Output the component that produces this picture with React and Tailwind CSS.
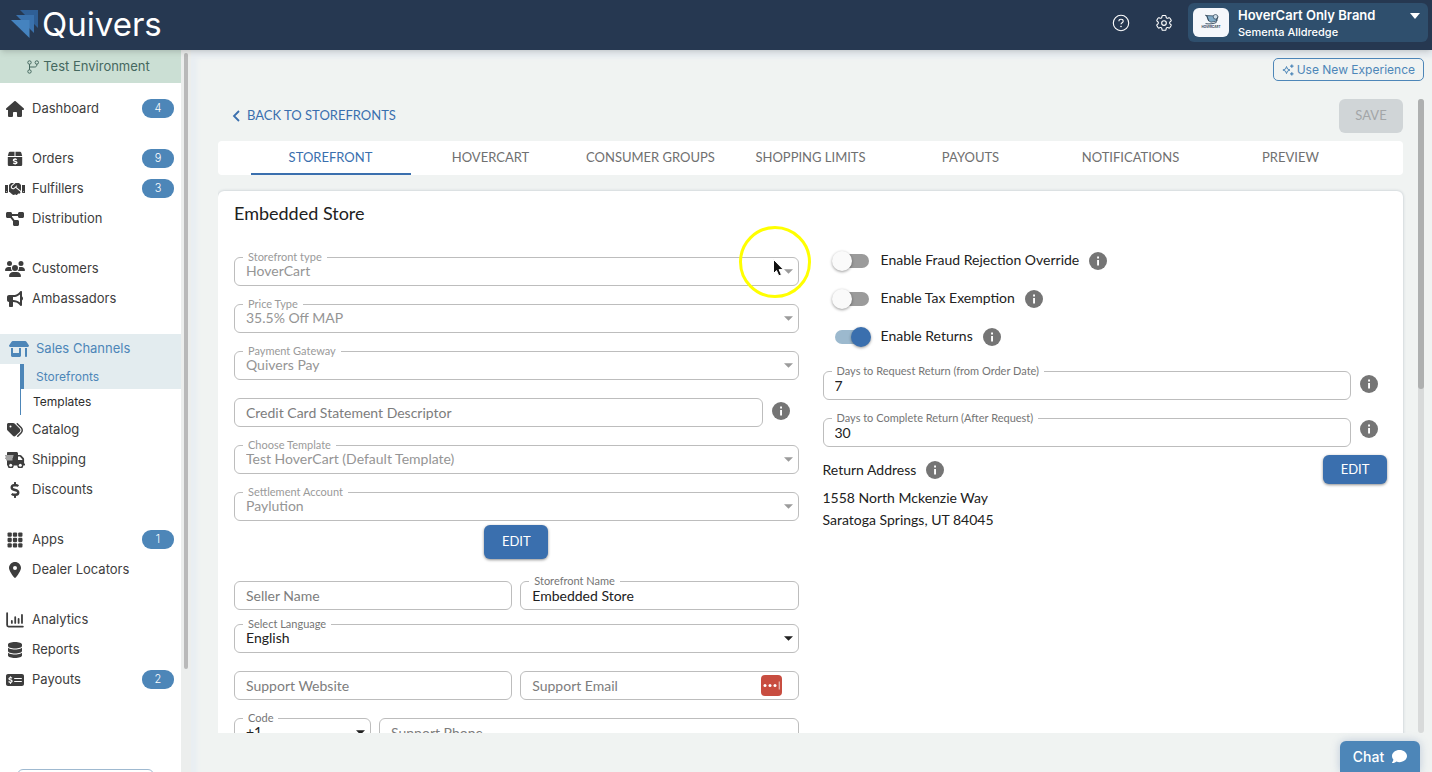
import { useState } from "react";
import clsx from "clsx";
import { FaHandshake, FaDollarSign } from "react-icons/fa";
import {
  FaHouse,
  FaBullhorn,
  FaDiagramProject,
  FaUsers,
  FaShop,
  FaTags,
  FaLocationDot,
  FaDatabase,
  FaMoneyCheckDollar,
  FaComment,
} from "react-icons/fa6";

function BoxDollarIcon({ className }) {
  return (
    <svg viewBox="0 0 16 16" className={className} fill="currentColor">
      <path d="M3 .8h4.500V5H.8l.9-3.300C1.900 1.100 2.400.8 3 .8zM8.500.8H13c.6 0 1.100.3 1.300.9l.9 3.300H8.500z" />
      <path d="M.8 6h14.400v7.500c0 .9-.7 1.600-1.600 1.600H2.400c-.9 0-1.600-.7-1.600-1.600z" />
      <path
        d="M9.800 8.600c-.9-.6-3.400-.7-3.400.6 0 1.500 3.500.8 3.500 2.300 0 1.300-2.600 1.200-3.700.5M8.100 7.200v1M8.100 12.400v1.200"
        fill="none"
        stroke="#fff"
        strokeWidth="1.400"
      />
    </svg>
  );
}

function TruckIcon({ className }) {
  return (
    <svg viewBox="0 0 20 16" className={className} fill="currentColor">
      <path d="M3 0h8.500c.8 0 1.500.7 1.500 1.500V3h2.200c.5 0 .9.200 1.200.5l2.300 2.400c.2.3.4.700.4 1.100v4.500h.4c.3 0 .5.3.5.5v1c0 .3-.2.5-.5.5h-1.200a3 3 0 0 1-6 0H8.700a3 3 0 0 1-6 0H2V1c0-.6.4-1 1-1z" />
      <path d="M13 4.500V8h4.300v-.8L14.900 4.500z" fill="#fff" />
      <path d="M0 3h8.500v1.500H8V6h-.5v2.500H1V7H0V5.500h1V4.500H0z" fill="#a3a3a3" />
      <circle cx="5.700" cy="13.200" r="1.500" fill="#fff" />
      <circle cx="15.300" cy="13.200" r="1.500" fill="#fff" />
    </svg>
  );
}

function AppsIcon({ className }) {
  return (
    <svg viewBox="0 0 15 15" className={className} fill="currentColor">
      {[0.5, 5.5, 10.5].map((y) =>
        [0.5, 5.5, 10.5].map((x) => (
          <rect key={`${x}-${y}`} x={x} y={y} width="4" height="4" rx="1" />
        )),
      )}
    </svg>
  );
}

function ChartIcon({ className }) {
  return (
    <svg
      viewBox="0 0 16 14"
      className={className}
      fill="none"
      stroke="currentColor"
      strokeWidth="1.600"
      strokeLinecap="round"
    >
      <path d="M1 1v10.500c0 .8.500 1.300 1.300 1.300H15" />
      <path d="M5.200 7.800v1.800M8.200 4.500v5.100M11.200 6v3.600M14.200 2.500v7.100" />
    </svg>
  );
}

function BranchIcon({ className }) {
  return (
    <svg
      viewBox="0 0 12 14"
      className={className}
      fill="none"
      stroke="currentColor"
      strokeWidth="1"
    >
      <circle cx="2.500" cy="2.500" r="1.700" />
      <circle cx="9.800" cy="2.500" r="1.700" />
      <circle cx="2.500" cy="11.500" r="1.700" />
      <path d="M2.500 4.200v5.600M9.800 4.200v.8c0 1.200-.8 2-2 2H2.500" />
    </svg>
  );
}

function SparklesIcon({ className }) {
  return (
    <svg
      viewBox="0 0 12 12"
      className={className}
      fill="none"
      stroke="currentColor"
    >
      <path d="M4.500 2.500 5.500 5 8 6 5.500 7.100 4.500 9.600 3.500 7.100.9 6 3.500 5z" />
      <path d="M9.800.4v3.400M8.100 2.100h3.400M9.800 8.200v3.400M8.100 9.900h3.400" strokeWidth="1.300" />
    </svg>
  );
}

function InfoIcon({ className }) {
  return (
    <svg
      viewBox="0 0 18 18"
      className={clsx("size-[18px] shrink-0", className)}
      role="img"
      aria-label="Info"
    >
      <circle cx="9" cy="9" r="9" fill="#757575" />
      <path d="M8.100 4.500h1.900v1.900H8.100zM8.100 8.100h1.900v5.400H8.100z" fill="#fff" />
    </svg>
  );
}

function HelpIcon() {
  return (
    <svg viewBox="0 0 18 18" className="size-[18px]" fill="none" stroke="#fff">
      <circle cx="9" cy="9" r="7.700" strokeWidth="1.100" />
      <path
        d="M6.900 7.200c0-1.200.9-1.900 2.100-1.900s2.200.7 2.200 1.900c0 1.600-2.200 1.600-2.200 3.100"
        strokeWidth="1.100"
      />
      <circle cx="9" cy="12.500" r=".8" fill="#fff" stroke="none" />
    </svg>
  );
}

function GearIcon() {
  return (
    <svg
      viewBox="0 0 24 24"
      className="size-5"
      fill="none"
      stroke="#fff"
      strokeWidth="1.300"
      strokeLinecap="round"
      strokeLinejoin="round"
    >
      <path d="M9.600 3.900c.1-.5.6-.9 1.100-.9h2.600c.5 0 1 .4 1.100.9l.2 1.300c.1.400.3.700.6.900l.3.100c.3.200.7.200 1.100.1l1.200-.5c.5-.2 1.100 0 1.400.5l1.300 2.200c.3.500.2 1.100-.3 1.400l-1 .8c-.3.300-.4.600-.4 1v.3c0 .4.100.8.400 1l1 .8c.4.400.5 1 .3 1.500l-1.300 2.200c-.3.500-.9.700-1.400.5l-1.200-.5c-.4-.1-.8-.1-1.100.1l-.3.100c-.3.200-.5.500-.6.900l-.2 1.300c-.1.500-.6.900-1.100.9h-2.600c-.5 0-1-.4-1.100-.9l-.2-1.300c-.1-.4-.3-.7-.6-.9l-.3-.1c-.3-.2-.7-.2-1.100-.1l-1.200.5c-.5.200-1.100 0-1.400-.5l-1.300-2.200c-.3-.5-.2-1.100.3-1.500l1-.8c.3-.2.4-.6.4-1v-.3c0-.4-.1-.7-.4-1l-1-.8c-.5-.3-.6-.9-.3-1.400l1.300-2.200c.3-.5.9-.7 1.400-.5l1.200.5c.4.100.8.100 1.100-.1l.3-.1c.3-.2.5-.5.6-.9z" />
      <circle cx="12" cy="12" r="2.800" />
    </svg>
  );
}

function HoverCartLogo() {
  return (
    <span className="flex h-[29px] w-9 shrink-0 items-center justify-center rounded-md bg-[#f5f7fb]">
      <svg viewBox="0 0 36 29" className="h-[29px] w-9">
        <path d="M13.500 7.500l9 .5 1.500 5-6 1.200-2.500-1.500z" fill="#7fa9c6" stroke="#2d4256" strokeWidth=".7" />
        <circle cx="22.500" cy="8.800" r="2.300" fill="#cfdde8" stroke="#2d4256" strokeWidth=".7" />
        <path d="M12 7.200l1.800.4 2 5.500M25 8.500l-1.500 5" fill="none" stroke="#2d4256" strokeWidth=".8" />
        <path d="M12.500 15.600c3 .6 8 .4 11-1.200" fill="none" stroke="#2d4256" strokeWidth=".9" />
        <text
          x="18"
          y="20"
          textAnchor="middle"
          fontSize="3"
          fontWeight="700"
          fontFamily="Inter, sans-serif"
          fill="#2d4256"
        >
          HOVERCART
        </text>
      </svg>
    </span>
  );
}

const navGroups = [
  [{ label: "Dashboard", icon: FaHouse, badge: 4 }],
  [
    { label: "Orders", icon: BoxDollarIcon, badge: 9 },
    { label: "Fulfillers", icon: FaHandshake, badge: 3, wide: true },
    { label: "Distribution", icon: FaDiagramProject },
  ],
  [
    { label: "Customers", icon: FaUsers, wide: true },
    { label: "Ambassadors", icon: FaBullhorn },
  ],
  [
    {
      label: "Sales Channels",
      icon: FaShop,
      wide: true,
      active: true,
      children: ["Storefronts", "Templates"],
    },
    { label: "Catalog", icon: FaTags },
    { label: "Shipping", icon: TruckIcon, wide: true },
    { label: "Discounts", icon: FaDollarSign },
  ],
  [
    { label: "Apps", icon: AppsIcon, badge: 1 },
    { label: "Dealer Locators", icon: FaLocationDot },
  ],
  [
    { label: "Analytics", icon: ChartIcon },
    { label: "Reports", icon: FaDatabase },
    { label: "Payouts", icon: FaMoneyCheckDollar, badge: 2, wide: true },
  ],
];

function NavItem({ item }) {
  const Icon = item.icon;
  return (
    <li>
      <a
        href="#"
        className={clsx(
          "flex h-[30px] items-center pr-[7px]",
          item.active ? "bg-[#e3ecef] pl-2 text-[#4d86b8]" : "pl-1 text-[#3d3d3d]",
        )}
      >
        <span className="flex w-[22px] shrink-0 justify-center">
          <Icon className={item.wide ? "h-4 w-5" : "h-4 w-[18px]"} />
        </span>
        <span className="ml-1.5 flex-1">{item.label}</span>
        {item.badge && (
          <span className="mb-0.5 flex h-[19px] w-8 items-center justify-center rounded-[9px] bg-[#4d86b8] text-[11px] font-light text-white">
            {item.badge}
          </span>
        )}
      </a>
      {item.children && (
        <ul className="ml-5 text-xs">
          {item.children.map((child, i) => (
            <li key={child}>
              <a
                href="#"
                className={clsx(
                  "flex items-center",
                  i === 0
                    ? "h-[25px] border-l-4 border-[#4d86b8] bg-[#e3ecef] pl-3 text-[#4d86b8]"
                    : "h-[26px] border-l border-[#4d86b8] pl-3 text-[#2d2d2d]",
                )}
              >
                {child}
              </a>
            </li>
          ))}
        </ul>
      )}
    </li>
  );
}

function Sidebar() {
  return (
    <aside className="flex w-[191px] shrink-0 overflow-hidden font-['Inter',sans-serif]">
      <div className="flex w-[181px] flex-col bg-white">
        <div className="flex h-[33px] shrink-0 items-center justify-center gap-1 bg-[#cbdfd4] pr-1 text-[13px] text-[#45685f]">
          <BranchIcon className="h-3.5 w-3" />
          Test Environment
        </div>
        <nav className="mt-[11px] flex flex-col gap-5 text-[13px]">
          {navGroups.map((group) => (
            <ul key={group[0].label}>
              {group.map((item) => (
                <NavItem key={item.label} item={item} />
              ))}
            </ul>
          ))}
        </nav>
        <button
          type="button"
          aria-label="More"
          className="mx-[17px] mt-[74px] h-8 w-[137px] shrink-0 rounded-md border border-[#9fb9d0]"
        />
      </div>
      <div className="w-[10px] bg-[#eceeed] pl-[3px] pt-[3px]">
        <div className="h-[616px] w-1 rounded-full bg-[#b9b9b9]" />
      </div>
    </aside>
  );
}

function Header() {
  return (
    <header className="z-10 flex h-[50px] shrink-0 items-start bg-[#263851] pl-[11px] pr-1 pt-[3px] font-['Inter',sans-serif] text-white shadow-md">
      <a href="#" className="flex items-center gap-[3px]">
        <svg viewBox="0 0 28 28" className="size-7">
          <path d="M9 0h18v18z" fill="#2f5f96" />
          <path d="M5 5h18v18z" fill="#3a72ae" />
          <path d="M0 10h18.500v18z" fill="#4583bf" />
        </svg>
        <span className="text-[33px] leading-[42px]">Quivers</span>
      </a>
      <div className="ml-auto flex items-center">
        <button type="button" aria-label="Help" className="mr-6">
          <HelpIcon />
        </button>
        <button type="button" aria-label="Settings" className="mr-3.5">
          <GearIcon />
        </button>
        <button
          type="button"
          className="flex h-[39px] w-60 items-center rounded-md bg-[#2f4f6d] pl-[5px] pr-2 text-left"
        >
          <HoverCartLogo />
          <span className="ml-[9px] flex-1">
            <span className="block text-[13px] font-semibold leading-[18px]">
              HoverCart Only Brand
            </span>
            <span className="block text-[11px] font-medium leading-4">
              Sementa Alldredge
            </span>
          </span>
          <svg viewBox="0 0 10 6" className="mb-3.5 h-1.5 w-2.5">
            <path d="M0 0h10L5 6z" fill="#fff" />
          </svg>
        </button>
      </div>
    </header>
  );
}

function FieldLabel({ htmlFor, disabled, children }) {
  return (
    <label
      htmlFor={htmlFor}
      className={clsx(
        "absolute -top-[7px] left-[9px] bg-white px-[5px] text-[11px] leading-[14px]",
        disabled ? "text-[#9a9a9a]" : "text-[#757575]",
      )}
    >
      {children}
    </label>
  );
}

function TextField({ id, label, value, placeholder, className, children }) {
  return (
    <div className={clsx("relative", className)}>
      <input
        id={id}
        type="text"
        defaultValue={value}
        placeholder={placeholder}
        aria-label={label ? undefined : placeholder}
        className="block h-[29px] w-full rounded-md border border-[#bdbdbd] bg-white px-[11px] text-sm text-[#212121] placeholder:text-[#7d7d7d]"
      />
      {label && <FieldLabel htmlFor={id}>{label}</FieldLabel>}
      {children}
    </div>
  );
}

function SelectField({ id, label, value, disabled, className }) {
  return (
    <div className={clsx("relative", className)}>
      <select
        id={id}
        disabled={disabled}
        className={clsx(
          "block h-[29px] w-full appearance-none rounded-md border border-[#bdbdbd] bg-white px-[11px] pb-px text-sm opacity-100",
          disabled ? "text-[#959595]" : "text-[#212121]",
        )}
      >
        <option>{value}</option>
      </select>
      <FieldLabel htmlFor={id} disabled={disabled}>
        {label}
      </FieldLabel>
      <svg
        viewBox="0 0 8 4"
        className={clsx(
          "pointer-events-none absolute right-1.5 top-3 h-[5px] w-[9px]",
          disabled ? "text-[#9b9b9b]" : "text-[#212121]",
        )}
      >
        <path d="M0 0h8L4 4z" fill="currentColor" />
      </svg>
    </div>
  );
}

function Toggle({ id, label, initial = false }) {
  const [checked, setChecked] = useState(initial);
  return (
    <div className="flex h-[38px] items-center pl-3">
      <input
        id={id}
        type="checkbox"
        role="switch"
        checked={checked}
        onChange={() => setChecked(!checked)}
        className="relative h-3.5 w-[34px] shrink-0 appearance-none rounded-full bg-[#9b9b9b] before:absolute before:-left-[3px] before:-top-[3px] before:size-5 before:rounded-full before:bg-[#fafafa] before:shadow-[0_1px_3px_rgba(0,0,0,0.4)] checked:bg-[#9cb9ce] checked:before:left-4 checked:before:bg-[#3a6fae]"
      />
      <label htmlFor={id} className="mb-0.5 ml-3 text-sm">
        {label}
      </label>
      <InfoIcon className="ml-2.5" />
    </div>
  );
}

const tabs = [
  "STOREFRONT",
  "HOVERCART",
  "CONSUMER GROUPS",
  "SHOPPING LIMITS",
  "PAYOUTS",
  "NOTIFICATIONS",
  "PREVIEW",
];

function Tabs() {
  const [active, setActive] = useState("STOREFRONT");
  return (
    <div
      role="tablist"
      className="mt-2 flex h-[34px] shrink-0 justify-center rounded bg-white"
    >
      {tabs.map((tab) => (
        <button
          key={tab}
          type="button"
          role="tab"
          aria-selected={active === tab}
          onClick={() => setActive(tab)}
          className={clsx(
            "w-40 border-b-2 pt-0.5 text-[13px]",
            active === tab
              ? "border-[#3a6fae] text-[#3a6fae]"
              : "border-transparent text-[#707070]",
          )}
        >
          {tab}
        </button>
      ))}
    </div>
  );
}

function EditButton({ className }) {
  return (
    <button
      type="button"
      className={clsx(
        "w-16 rounded-md bg-[#3a6fae] text-[13px] text-white shadow-[0_1px_3px_rgba(0,0,0,0.45)]",
        className,
      )}
    >
      EDIT
    </button>
  );
}

function StoreSettings() {
  return (
    <div className="flex flex-col">
      <div className="flex flex-col gap-[18px]">
        <SelectField id="type" label="Storefront type" value="HoverCart" disabled />
        <SelectField id="price" label="Price Type" value="35.5% Off MAP" disabled />
        <SelectField id="gateway" label="Payment Gateway" value="Quivers Pay" disabled />
        <div className="flex items-start gap-[9px] pr-[9px]">
          <TextField
            id="descriptor"
            placeholder="Credit Card Statement Descriptor"
            className="flex-1"
          />
          <InfoIcon className="mt-1" />
        </div>
        <SelectField
          id="template"
          label="Choose Template"
          value="Test HoverCart (Default Template)"
          disabled
        />
        <SelectField id="account" label="Settlement Account" value="Paylution" disabled />
      </div>
      <EditButton className="mt-1 h-[34px] self-center" />
      <div className="mt-[22px] grid grid-cols-2 gap-2">
        <TextField id="seller" placeholder="Seller Name" />
        <TextField id="storeName" label="Storefront Name" value="Embedded Store" />
      </div>
      <SelectField
        id="language"
        label="Select Language"
        value="English"
        className="mt-3.5"
      />
      <div className="mt-[18px] grid grid-cols-2 gap-2">
        <TextField id="website" placeholder="Support Website" />
        <TextField id="email" placeholder="Support Email">
          <button
            type="button"
            aria-label="Fill from password manager"
            className="absolute right-[17px] top-1 size-[21px] rounded bg-[#c84d40]"
          >
            <svg viewBox="0 0 21 21" className="size-[21px]">
              <circle cx="4" cy="10.500" r="1.500" fill="#fff" />
              <circle cx="9" cy="10.500" r="1.500" fill="#fff" />
              <circle cx="14" cy="10.500" r="1.500" fill="#fff" />
              <path d="M18.300 6.500v8" stroke="#e3b5b0" strokeWidth="1.300" />
            </svg>
          </button>
        </TextField>
      </div>
      <div className="mt-[18px] flex gap-2">
        <SelectField id="code" label="Code" value="+1" className="w-[137px]" />
        <TextField id="phone" placeholder="Support Phone" className="flex-1" />
      </div>
    </div>
  );
}

function ReturnSettings() {
  return (
    <div className="-mt-[15px] flex flex-col text-sm text-[#212121]">
      <Toggle id="fraud" label="Enable Fraud Rejection Override" />
      <Toggle id="tax" label="Enable Tax Exemption" />
      <Toggle id="returns" label="Enable Returns" initial />
      <div className="mt-[15px] flex flex-col gap-[18px] pr-[9px]">
        <div className="flex items-start gap-[9px]">
          <TextField
            id="requestDays"
            label="Days to Request Return (from Order Date)"
            value="7"
            className="flex-1"
          />
          <InfoIcon className="mt-1" />
        </div>
        <div className="flex items-start gap-[9px]">
          <TextField
            id="completeDays"
            label="Days to Complete Return (After Request)"
            value="30"
            className="flex-1"
          />
          <InfoIcon className="mt-0.5" />
        </div>
      </div>
      <div className="mt-2 flex items-center">
        <span>Return Address</span>
        <InfoIcon className="ml-2.5" />
        <EditButton className="ml-auto h-[29px]" />
      </div>
      <address className="mt-[3px] not-italic leading-[22px]">
        1558 North Mckenzie Way
        <br />
        Saratoga Springs, UT 84045
      </address>
    </div>
  );
}

function PointerHighlight() {
  return (
    <svg
      viewBox="0 0 72 72"
      className="pointer-events-none absolute left-[739px] top-[226px] z-20 size-[72px]"
      aria-hidden="true"
    >
      <circle cx="36" cy="36" r="34.500" fill="none" stroke="#ffff00" strokeWidth="3" />
      <path
        d="M34.500 33.500v14l3-2.900 2.300 5.200 2.600-1.100-2.300-5.100h4.300z"
        fill="#111"
        stroke="#fff"
        strokeWidth="1"
      />
    </svg>
  );
}

export default function App() {
  return (
    <div className="relative flex h-screen flex-col overflow-hidden bg-[#f0f3f2] font-['Lato',sans-serif]">
      <Header />
      <div className="flex min-h-0 flex-1">
        <Sidebar />
        <main className="flex min-w-0 flex-1 flex-col pb-[39px] pl-[27px] pr-2 pt-2 shadow-[inset_6px_8px_4px_#e9eef2]">
          <button
            type="button"
            className="flex h-[23px] shrink-0 items-center gap-[3px] self-end rounded-[5px] border border-[#4d86b8] px-2 font-['Inter',sans-serif] text-xs text-[#4d86b8]"
          >
            <SparklesIcon className="size-3" />
            Use New Experience
          </button>
          <div className="mt-[18px] flex min-h-0 flex-1">
            <div className="flex min-w-0 flex-1 flex-col overflow-hidden pr-[15px]">
              <div className="flex h-[34px] shrink-0 items-center justify-between">
                <a
                  href="#"
                  className="flex items-center gap-1.5 pl-3.5 text-[13px] text-[#3a6fae]"
                >
                  <svg
                    viewBox="0 0 9 12"
                    className="h-3 w-[9px]"
                    fill="none"
                    stroke="currentColor"
                    strokeWidth="1.800"
                  >
                    <path d="M7 1 2 6l5 5" />
                  </svg>
                  BACK TO STOREFRONTS
                </a>
                <button
                  type="button"
                  disabled
                  className="h-[34px] w-16 rounded-md bg-[#d0d5d7] text-[13px] text-[#a3a6a8]"
                >
                  SAVE
                </button>
              </div>
              <Tabs />
              <section className="mt-4 shrink-0 rounded-md bg-white px-4 pb-10 pt-[11px] shadow-[0_0_3px_rgba(60,80,110,0.3)]">
                <h1 className="text-lg leading-[22px] text-[#212121]">Embedded Store</h1>
                <div className="mt-[33px] grid grid-cols-2 gap-6">
                  <StoreSettings />
                  <ReturnSettings />
                </div>
              </section>
            </div>
            <div className="w-1.5 shrink-0 rounded-full bg-[#d8dada]">
              <div className="h-[290px] rounded-full bg-[#aeb0b0]" />
            </div>
          </div>
        </main>
      </div>
      <button
        type="button"
        className="absolute bottom-0 right-3 flex h-[31px] w-20 items-center justify-center gap-2 rounded-t-md bg-[#4d86b8] font-['Inter',sans-serif] text-sm font-medium text-white shadow-[0_0_8px_rgba(90,120,170,0.35)]"
      >
        Chat
        <FaComment className="size-[15px]" />
      </button>
      <PointerHighlight />
    </div>
  );
}
